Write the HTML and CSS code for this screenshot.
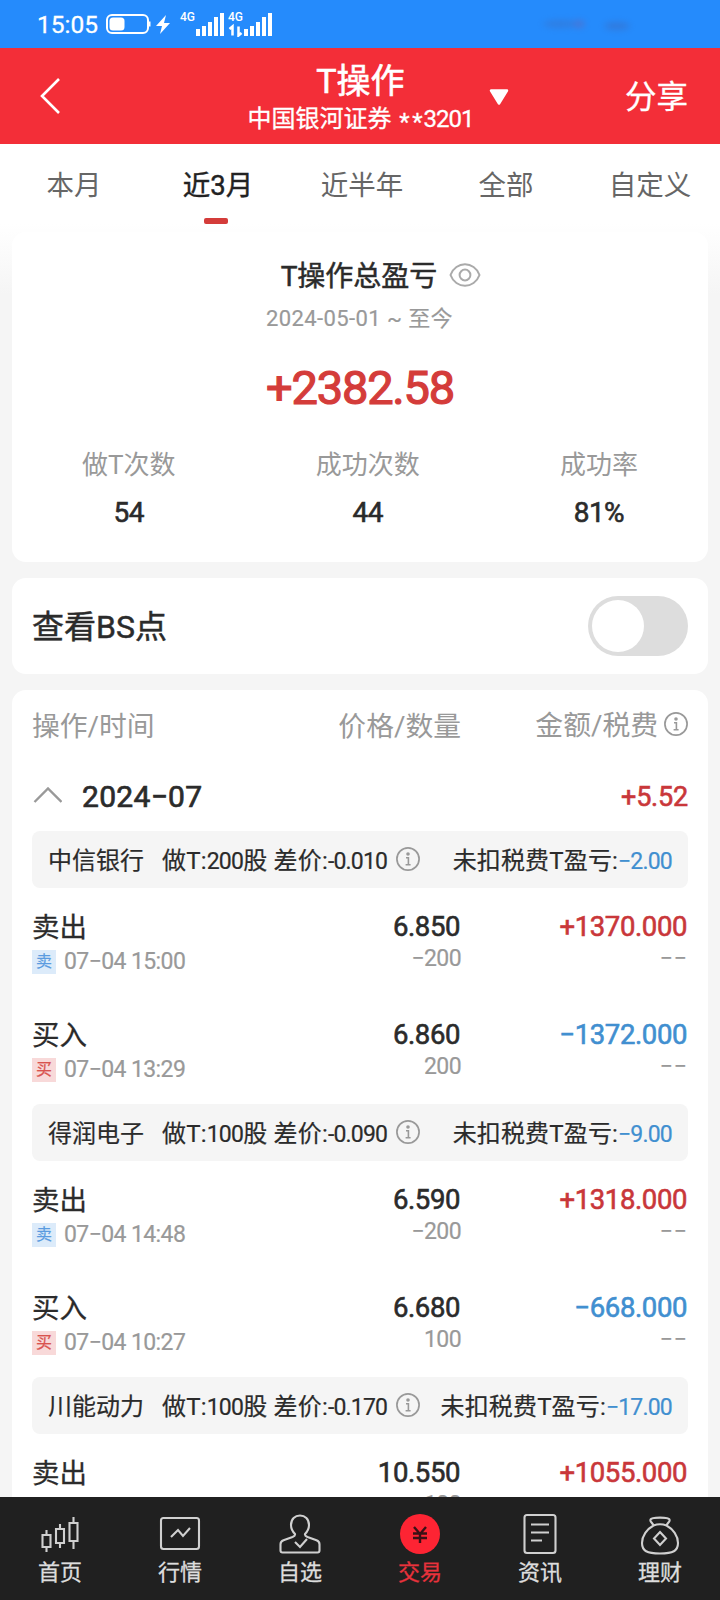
FILE: index.html
```html
<!DOCTYPE html>
<html lang="zh-CN">
<head>
  <meta charset="utf-8">
  <title>T操作</title>
  <link rel="stylesheet" href="styles.css">
</head>
<body>
  <!-- shared icons -->
  <svg width="0" height="0" class="defs">
    <symbol id="info" viewBox="0 0 24 24">
      <circle cx="12" cy="12" r="11.1" fill="none" stroke="currentColor" stroke-width="1.7"/>
      <circle cx="12" cy="7" r="1.8" fill="currentColor"/>
      <path d="M10 10.700h2.400v6.800M9.600 17.700h5" fill="none" stroke="currentColor" stroke-width="1.600"/>
    </symbol>
  </svg>

  <div class="status-bar">
    <span class="time">15:05</span>
    <svg class="status-icons" width="170" height="26" viewBox="0 0 170 26">
      <rect x="2" y="4" width="41" height="18" rx="5" fill="none" stroke="#fff" stroke-width="2"/>
      <rect x="4.500" y="6.500" width="15" height="13" rx="3.500" fill="#fff"/>
      <path d="M44 10.500v5" stroke="#fff" stroke-width="3"/>
      <path d="M61 4L51 15h6l-2 8 10-11h-6z" fill="#fff"/>
      <text x="75" y="10" class="net">4G</text>
      <path d="M93 18v7M99 15v10M105 11v14M111 6v19M117 2v23" stroke="#fff" stroke-width="4"/>
      <text x="123" y="10" class="net">4G</text>
      <path d="M124.500 18l3-2.500v9M136.500 22l-3 2.500v-9" fill="none" stroke="#fff" stroke-width="2.500"/>
      <path d="M141 18v7M147 15v10M153 11v14M159 6v19M165 2v23" stroke="#fff" stroke-width="4"/>
    </svg>
    <svg class="smudge" width="100" height="22" viewBox="0 0 100 22">
      <ellipse cx="24" cy="11" rx="18" ry="4" fill="#3c6fc4"/>
      <ellipse cx="42" cy="11" rx="6" ry="4" fill="#6a5fae"/>
      <ellipse cx="80" cy="13" rx="13" ry="4" fill="#3f66b8"/>
    </svg>
  </div>

  <div class="header">
    <svg class="back" width="22" height="38" viewBox="0 0 22 38"><path d="M20 2L3 19l17 17" fill="none" stroke="#fff" stroke-width="2.600"/></svg>
    <div class="header-center">
      <div class="title">T操作</div>
      <div class="account">中国银河证券 <span class="account-no"><i>*</i><i>*</i>3201</span></div>
      <svg class="arrow" width="20" height="17" viewBox="0 0 20 17"><path d="M2 1.500h16L10 14.500z" fill="#fff" stroke="#fff" stroke-width="2.500" stroke-linejoin="round"/></svg>
    </div>
    <div class="share">分享</div>
  </div>

  <div class="content">
    <div class="tabs">
      <div class="tab">本月</div>
      <div class="tab active">近3月</div>
      <div class="tab">近半年</div>
      <div class="tab">全部</div>
      <div class="tab">自定义</div>
    </div>

    <div class="card summary">
      <div class="summary-title">
        <span>T操作总盈亏</span>
        <svg width="32" height="26" viewBox="0 0 32 26" fill="none" stroke="#aaa" stroke-width="2">
          <path d="M1.500 13C4 6 10 2.300 16 2.300S28 6 30.500 13C28 20 22 23.700 16 23.700S4 20 1.500 13z"/>
          <circle cx="16" cy="13" r="5.400"/>
        </svg>
      </div>
      <div class="summary-date">2024-05-01 ~ 至今</div>
      <div class="summary-total">+2382.58</div>
      <div class="stats">
        <div class="stat"><div class="stat-label">做T次数</div><div class="stat-value">54</div></div>
        <div class="stat"><div class="stat-label">成功次数</div><div class="stat-value">44</div></div>
        <div class="stat"><div class="stat-label">成功率</div><div class="stat-value">81%</div></div>
      </div>
    </div>

    <div class="card bs">
      <span class="bs-label">查看BS点</span>
      <div class="switch"><div class="knob"></div></div>
    </div>

    <div class="card list">
      <div class="row list-head">
        <div class="col-op">操作/时间</div>
        <div class="col-price">价格/数量</div>
        <div class="col-amount">金额/税费<svg class="info"><use href="#info"/></svg></div>
      </div>

      <div class="month">
        <svg width="30" height="18" viewBox="0 0 30 18"><path d="M2.500 15L16 1.500 29.500 15" fill="none" stroke="#999" stroke-width="2.400"/></svg>
        <span class="month-name">2024−07</span>
        <span class="month-total up">+5.52</span>
      </div>

      <div class="stock">
        <span class="stock-name">中信银行</span>
        <span class="diff">做T:<b>200</b>股 差价:<b>-0.010</b></span>
        <svg class="info"><use href="#info"/></svg>
        <span class="profit">未扣税费T盈亏:<b class="down">−2.00</b></span>
      </div>
      <div class="row trade">
        <div class="col-op"><div class="main">卖出</div><div class="sub"><span class="tag sell">卖</span>07−04 15:00</div></div>
        <div class="col-price"><div class="main num">6.850</div><div class="sub">−200</div></div>
        <div class="col-amount"><div class="main num up">+1370.000</div><div class="sub dash">−−</div></div>
      </div>
      <div class="row trade">
        <div class="col-op"><div class="main">买入</div><div class="sub"><span class="tag buy">买</span>07−04 13:29</div></div>
        <div class="col-price"><div class="main num">6.860</div><div class="sub">200</div></div>
        <div class="col-amount"><div class="main num down">−1372.000</div><div class="sub dash">−−</div></div>
      </div>

      <div class="stock">
        <span class="stock-name">得润电子</span>
        <span class="diff">做T:<b>100</b>股 差价:<b>-0.090</b></span>
        <svg class="info"><use href="#info"/></svg>
        <span class="profit">未扣税费T盈亏:<b class="down">−9.00</b></span>
      </div>
      <div class="row trade">
        <div class="col-op"><div class="main">卖出</div><div class="sub"><span class="tag sell">卖</span>07−04 14:48</div></div>
        <div class="col-price"><div class="main num">6.590</div><div class="sub">−200</div></div>
        <div class="col-amount"><div class="main num up">+1318.000</div><div class="sub dash">−−</div></div>
      </div>
      <div class="row trade">
        <div class="col-op"><div class="main">买入</div><div class="sub"><span class="tag buy">买</span>07−04 10:27</div></div>
        <div class="col-price"><div class="main num">6.680</div><div class="sub">100</div></div>
        <div class="col-amount"><div class="main num down">−668.000</div><div class="sub dash">−−</div></div>
      </div>

      <div class="stock">
        <span class="stock-name">川能动力</span>
        <span class="diff">做T:<b>100</b>股 差价:<b>-0.170</b></span>
        <svg class="info"><use href="#info"/></svg>
        <span class="profit">未扣税费T盈亏:<b class="down">−17.00</b></span>
      </div>
      <div class="row trade">
        <div class="col-op"><div class="main">卖出</div><div class="sub"><span class="tag"></span></div></div>
        <div class="col-price"><div class="main num">10.550</div><div class="sub">100</div></div>
        <div class="col-amount"><div class="main num up">+1055.000</div></div>
      </div>
    </div>
  </div>

  <div class="nav">
    <div class="nav-item">
      <svg width="44" height="44" viewBox="0 0 44 44">
        <path d="M4.500 23h8v12h-8zM8.500 23v-5M8.500 35v5M18 17h8v14h-8zM22 17v-5M22 31v5M31.500 11h8v18h-8zM35.500 11V5M35.500 29v8"/>
      </svg>
      <span>首页</span>
    </div>
    <div class="nav-item">
      <svg width="44" height="44" viewBox="0 0 44 44">
        <rect x="3" y="6" width="38" height="31" rx="2.500"/>
        <path d="M13 25l7-7 5 6 7-8"/>
      </svg>
      <span>行情</span>
    </div>
    <div class="nav-item">
      <svg width="44" height="44" viewBox="0 0 44 44">
        <path d="M17 22c-2-2-4-5-4-9C13 7 17 3.500 22 3.500s9 3.500 9 9.500c0 4-2 7-4 9-.3 1.500.5 2.200 2.500 3l9 3.200c2 .8 3 2 3 4V38.500q0 2-2 2H4.500q-2 0-2-2V32.200c0-2 1-3.200 3-4l9-3.200c2-.800 2.800-1.500 2.500-3z"/>
        <path d="M17 30l5 5 7-8"/>
      </svg>
      <span>自选</span>
    </div>
    <div class="nav-item active">
      <svg width="44" height="44" viewBox="0 0 44 44">
        <circle class="coin" cx="22" cy="22" r="20"/>
        <path class="yen" d="M16 15l6 7 6-7M15 21.500h14M15 26h14M22 22v9"/>
      </svg>
      <span>交易</span>
    </div>
    <div class="nav-item">
      <svg width="44" height="44" viewBox="0 0 44 44">
        <rect x="6.500" y="3" width="31" height="38" rx="2.500"/>
        <path d="M13 12.500h18M13 20.500h18M13 28.500h11"/>
      </svg>
      <span>资讯</span>
    </div>
    <div class="nav-item">
      <svg width="44" height="44" viewBox="0 0 44 44">
        <path d="M15.500 13.500c-1-3-4-4-3-6 1-2.500 18-2.500 19 0 1 2-2 3-3 6M15.500 13.500q6.500-2.500 13 0C35 17 40 24 40 31c0 8-5 10.500-18 10.500S4 39 4 31c0-7 5-14 11.500-17.500z"/>
        <path d="M22 20l6 6.500-6 6.500-6-6.500z"/>
      </svg>
      <span>理财</span>
    </div>
  </div>
</body>
</html>
```

FILE: styles.css
```css
* {
  margin: 0;
  padding: 0;
  box-sizing: border-box;
}

body {
  width: 720px;
  height: 1600px;
  font-family: Roboto, "Noto Sans CJK SC", sans-serif;
  color: #2b2b2b;
  background: #f5f5f5;
  display: flex;
  flex-direction: column;
  overflow: hidden;
}

.defs {
  position: absolute;
}

svg {
  flex-shrink: 0;
}

/* status bar */
.status-bar {
  height: 48px;
  flex-shrink: 0;
  display: flex;
  align-items: center;
  padding-left: 37px;
  background: #258bfc;
  color: #fff;
}

.time {
  width: 68px;
  padding-top: 1px;
  font-size: 24.5px;
  -webkit-text-stroke: 0.3px;
  white-space: nowrap;
}

.net {
  font-size: 12px;
  font-weight: 500;
  fill: #fff;
}

.smudge {
  margin-left: 262px;
  opacity: 0.45;
  filter: blur(3px);
}

/* header */
.header {
  height: 96px;
  flex-shrink: 0;
  display: flex;
  align-items: center;
  justify-content: space-between;
  padding: 0 32px 0 39px;
  background: #f32e38;
  color: #fff;
}

.back {
  margin-right: 35px;
}

.header-center {
  position: relative;
  padding-top: 5px;
  text-align: center;
}

.title {
  font-size: 34px;
  line-height: 40px;
  -webkit-text-stroke: 0.6px;
}

.account {
  font-size: 24px;
  line-height: 36px;
  white-space: nowrap;
  -webkit-text-stroke: 0.3px;
}

.account-no {
  letter-spacing: -1px;
}

.account-no i {
  display: inline-block;
  width: 13px;
  font-style: normal;
  transform: translateY(3px);
}

.arrow {
  position: absolute;
  right: -36px;
  top: 33px;
}

.share {
  padding-bottom: 4px;
  font-size: 31.5px;
  -webkit-text-stroke: 0.3px;
}

/* scroll area */
.content {
  height: 1353px;
  flex-shrink: 0;
  overflow: hidden;
  background: linear-gradient(#fff 80px, #f5f5f5 150px);
}

.tabs {
  display: flex;
  height: 88px;
  padding-left: 2px;
}

.tab {
  width: 144px;
  flex-shrink: 0;
  display: flex;
  flex-direction: column;
  align-items: center;
  font-size: 27.5px;
  line-height: 40px;
  padding-top: 22px;
  color: #666;
}

.tab.active {
  color: #222;
  -webkit-text-stroke: 0.4px;
}

.tab.active::after {
  content: "";
  width: 24px;
  height: 6px;
  margin-top: 12px;
  margin-right: 4px;
  border-radius: 2px;
  background: #d43c3a;
}

.card {
  margin: 0 12px 16px;
  border-radius: 14px;
  background: #fff;
}

.summary {
  height: 330px;
  display: flex;
  flex-direction: column;
  align-items: center;
  padding-top: 23px;
}

.summary-title {
  display: flex;
  align-items: center;
  gap: 12px;
  margin-left: 42px;
  font-size: 28px;
  line-height: 40px;
  -webkit-text-stroke: 0.5px;
}

.summary-title span {
  padding-top: 2px;
}

.summary-title svg {
  margin-bottom: 2px;
}

.summary-date {
  margin-top: 6px;
  margin-right: 1px;
  font-size: 22px;
  line-height: 32px;
  letter-spacing: 0.4px;
  color: #999;
  -webkit-text-stroke: 0.2px;
}

.summary-total {
  margin-top: 23px;
  font-size: 47px;
  line-height: 60px;
  letter-spacing: -1.2px;
  color: #d43c3a;
  -webkit-text-stroke: 1.2px;
}

.stats {
  width: 100%;
  display: flex;
  justify-content: space-around;
  margin-top: 27px;
  text-align: center;
}

.stat-label {
  font-size: 26px;
  line-height: 40px;
  color: #999;
}

.stat-value {
  margin-top: 8px;
  font-size: 28px;
  line-height: 40px;
  letter-spacing: -0.5px;
  -webkit-text-stroke: 0.6px;
}

.bs {
  height: 96px;
  display: flex;
  align-items: center;
  justify-content: space-between;
  padding: 0 20px;
}

.bs-label {
  padding-bottom: 4px;
  font-size: 32px;
  -webkit-text-stroke: 0.5px;
}

.switch {
  width: 100px;
  height: 60px;
  padding: 4px;
  border-radius: 30px;
  background: #ddd;
}

.knob {
  width: 52px;
  height: 52px;
  border-radius: 50%;
  background: #fff;
}

/* trade list */
.list {
  padding: 0 20px;
}

.row {
  display: flex;
}

.col-op {
  width: 229px;
}

.col-price {
  width: 200px;
  text-align: right;
}

.col-amount {
  width: 227px;
  text-align: right;
}

.list-head {
  height: 72px;
  font-size: 27.8px;
  line-height: 74px;
  color: #999;
}

.list-head .col-amount {
  display: flex;
  align-items: center;
  justify-content: flex-end;
  gap: 6px;
}

.list-head .info {
  margin-bottom: 4px;
}

.info {
  width: 24px;
  height: 24px;
  color: #999;
}

.month {
  height: 69px;
  display: flex;
  align-items: center;
}

.month svg {
  margin-bottom: 2px;
}

.month-name {
  margin-left: 20px;
  font-size: 30px;
  letter-spacing: 0.3px;
  -webkit-text-stroke: 0.7px;
}

.month-total {
  margin-left: auto;
  font-size: 27px;
  letter-spacing: -0.2px;
  -webkit-text-stroke: 0.6px;
}

.up {
  color: #c9373a;
}

.down {
  color: #418fd0;
}

.stock {
  height: 57px;
  display: flex;
  align-items: center;
  padding: 0 16px 2px;
  border-radius: 8px;
  background: #f5f5f5;
  font-size: 24px;
  white-space: nowrap;
  -webkit-text-stroke: 0.2px;
}

.stock b {
  font-size: 23px;
  font-weight: 400;
  letter-spacing: -0.8px;
}

.stock-name {
  margin-right: 18px;
}

.diff {
  width: 228px;
  letter-spacing: 0.2px;
}

.stock .info {
  margin-left: 6px;
}

.profit {
  margin-left: auto;
  letter-spacing: 0.15px;
}

.trade {
  height: 108px;
  padding-top: 18px;
}

.main {
  font-size: 27.5px;
  line-height: 44px;
  height: 41px;
  -webkit-text-stroke: 0.3px;
}

.num {
  letter-spacing: -0.4px;
  line-height: 42px;
  padding-right: 1px;
  -webkit-text-stroke: 0.6px;
}

.sub {
  height: 24px;
  display: flex;
  align-items: center;
  justify-content: flex-end;
  font-size: 23px;
  line-height: 24px;
  letter-spacing: -0.6px;
  color: #999;
  -webkit-text-stroke: 0.2px;
}

.col-op .sub {
  justify-content: flex-start;
  margin-top: 3px;
}

.dash {
  letter-spacing: 1px;
}

.tag {
  width: 24px;
  height: 24px;
  margin-right: 8px;
  font-size: 16px;
  letter-spacing: 0;
  text-align: center;
}

.sell {
  background: #dcebfa;
  color: #5a9be0;
}

.buy {
  background: #f8d9d9;
  color: #d9534f;
}

/* bottom nav */
.nav {
  height: 103px;
  flex-shrink: 0;
  display: flex;
  background: #202020;
}

.nav-item {
  width: 120px;
  display: flex;
  flex-direction: column;
  align-items: center;
  padding-top: 15px;
  font-size: 22px;
  line-height: 34px;
  color: #ddd;
}

.nav-item span {
  -webkit-text-stroke: 0.3px;
}

.nav-item svg {
  fill: none;
  stroke: #d0d0d0;
  stroke-width: 2.1;
}

.nav-item.active {
  color: #e8323c;
}

.nav-item .coin {
  fill: #fd2433;
  stroke: none;
}

.nav-item .yen {
  stroke: #3a1015;
  stroke-width: 2.4;
}
```
